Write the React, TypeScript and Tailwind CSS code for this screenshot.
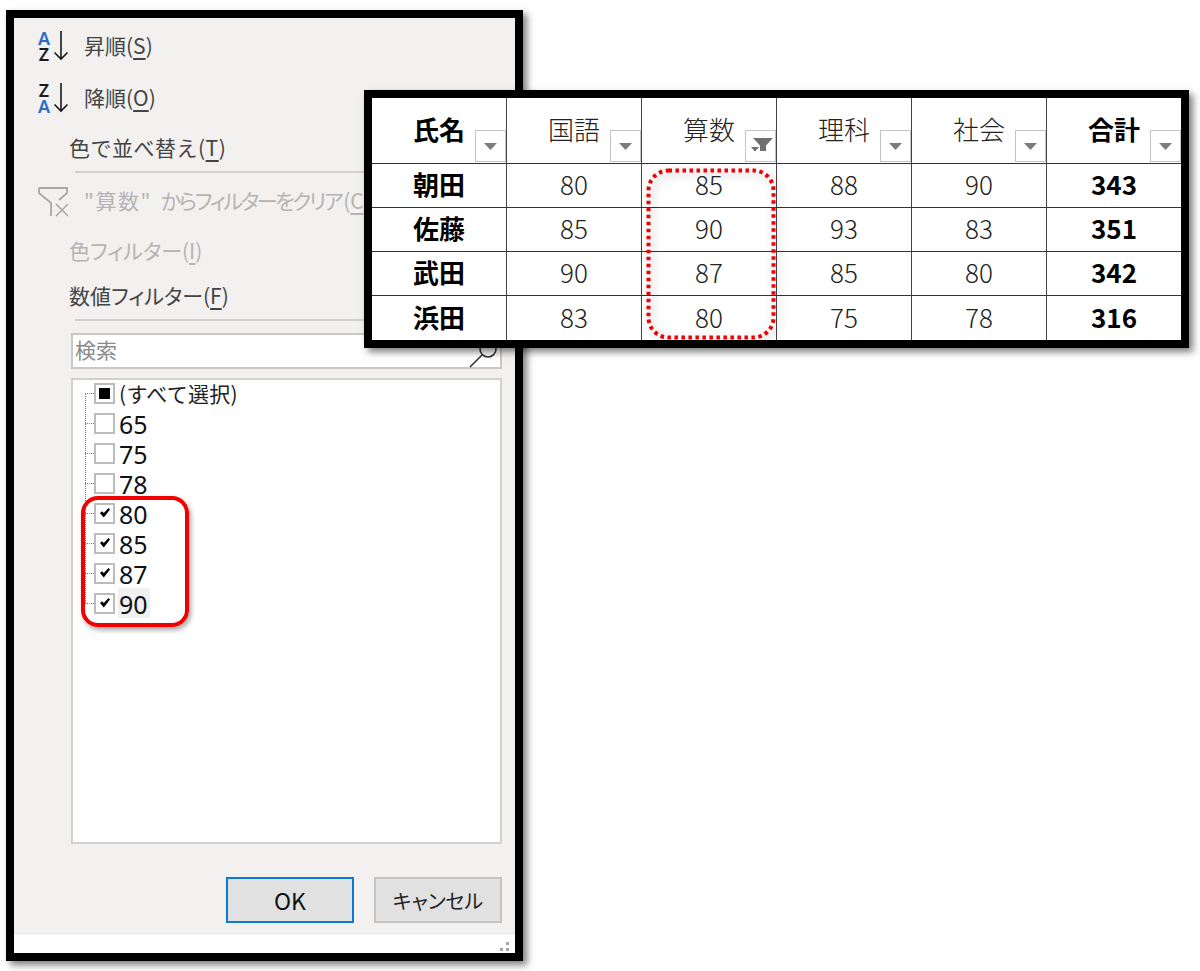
import type { ReactNode } from "react";

const font = "[font-family:'Noto_Sans_CJK_JP',sans-serif]";
const palt = "[font-feature-settings:'palt']";

const headers = [
  { label: "氏名", bold: true },
  { label: "国語" },
  { label: "算数", filter: true },
  { label: "理科" },
  { label: "社会" },
  { label: "合計", bold: true },
];

const rows = [
  ["朝田", "80", "85", "88", "90", "343"],
  ["佐藤", "85", "90", "93", "83", "351"],
  ["武田", "90", "87", "85", "80", "342"],
  ["浜田", "83", "80", "75", "78", "316"],
];

const items = [
  { label: "65", checked: false },
  { label: "75", checked: false },
  { label: "78", checked: false },
  { label: "80", checked: true },
  { label: "85", checked: true },
  { label: "87", checked: true },
  { label: "90", checked: true },
];

function SortIcon({ top, bottom }: { top: string; bottom: string }) {
  return (
    <div className="relative w-[34px] h-[32px] mr-[13px] shrink-0">
      <div className="flex flex-col items-center w-[14px] font-['Noto_Sans'] font-semibold text-[18px] leading-[16px]">
        <span className={top === "A" ? "text-[#2b6cc4]" : "text-[#1a1a1a]"}>{top}</span>
        <span className={bottom === "A" ? "text-[#2b6cc4]" : "text-[#1a1a1a]"}>{bottom}</span>
      </div>
      <svg className="absolute left-[16px] top-0" width="16" height="31" viewBox="0 0 16 31" fill="none" stroke="#1a1a1a" strokeWidth="1.6">
        <path d="M8 1v28M1.500 22.500 8 29l6.500-6.500" />
      </svg>
    </div>
  );
}

function FilterButton({ active }: { active?: boolean }) {
  return (
    <div className="absolute right-0 bottom-[1px] w-[31px] h-[32px] bg-white border border-[#c4c4c4]">
      {active ? (
        <svg className="absolute left-[5px] top-[7px]" width="23" height="15" viewBox="0 0 23 15" fill="#6f6f6f">
          <path d="M2 0h20l-7 7.500V13h-6V7.500zM0 9h8l-4 4.500z" />
        </svg>
      ) : (
        <svg className="absolute left-[8px] top-[12px]" width="13" height="7" viewBox="0 0 13 7" fill="#7c7c7c">
          <path d="M0 0h13L6.500 7z" />
        </svg>
      )}
    </div>
  );
}

function ScoreTable() {
  return (
    <div className={`absolute left-[364px] top-[90px] w-[825px] h-[258px] bg-white border-[8px] border-black shadow-[4px_4px_7px_rgba(0,0,0,0.5)] flex flex-col ${font} text-[#222]`}>
      <div className="flex h-[66px] border-b border-[#333]">
        {headers.map((h, i) => (
          <div
            key={h.label}
            className={`relative flex-1 flex justify-center pt-[11px] text-[26px] leading-[40px] ${i < 5 ? "border-r border-[#444]" : ""} ${h.bold ? "font-bold text-black" : "font-light"}`}
          >
            {h.label}
            <FilterButton active={h.filter} />
          </div>
        ))}
      </div>
      {rows.map((row, r) => (
        <div key={row[0]} className={`flex h-[44px] ${r < 3 ? "border-b border-[#333]" : ""}`}>
          {row.map((cell, i) => (
            <div
              key={i}
              className={`flex-1 flex items-center justify-center pb-[4px] text-[26px] ${i < 5 ? "border-r border-[#444]" : ""} ${i === 0 || i === 5 ? "font-bold text-black" : "font-light"}`}
            >
              {cell}
            </div>
          ))}
        </div>
      ))}
      <svg
        className="absolute left-[274px] top-[70px] drop-shadow-[3px_3px_5px_rgba(0,0,0,0.3)]"
        width="130"
        height="172"
        viewBox="0 0 130 172"
        fill="none"
        stroke="#f00000"
        strokeWidth="4"
        strokeDasharray="3.500 3.500"
      >
        <rect x="2.500" y="2.500" width="125" height="167" rx="20" />
      </svg>
    </div>
  );
}

function Checkbox({ checked, mixed }: { checked?: boolean; mixed?: boolean }) {
  return (
    <div className="relative w-[21px] h-[21px] bg-white border-2 border-[#bcbcbc] shrink-0">
      {mixed && <div className="absolute left-[3px] top-[3px] w-[11px] h-[11px] bg-black" />}
      {checked && (
        <svg className="absolute left-[4px] top-[3px]" width="10" height="10" viewBox="0 0 10 10" fill="#000">
          <path d="M0 5 2 3.200 3.800 5 8.500 0 10 1.500 3.800 9.500z" />
        </svg>
      )}
    </div>
  );
}

function TreeRow({ label, children, hover }: { label: string; children: ReactNode; hover?: boolean }) {
  return (
    <div className="flex items-center h-[30px]">
      <div className="w-[9px] border-t border-dotted border-[#777]" />
      {children}
      <span className={`ml-[3px] pl-[1px] pr-[2px] pt-[2px] text-[25px] leading-[28px] font-['Noto_Sans',sans-serif] text-[#111] ${hover ? "bg-[#f0f0f0]" : ""}`}>
        {label}
      </span>
    </div>
  );
}

function FilterMenu() {
  return (
    <div className={`relative w-[517px] h-[951px] ml-[6px] bg-[#f2f1f0] border-[8px] border-black shadow-[4px_4px_7px_rgba(0,0,0,0.5)] flex flex-col ${font} text-[21px] text-[#444]`}>
      <div className="pt-[12px] px-[23px]">
        <div className="flex items-center h-[32px]">
          <SortIcon top="A" bottom="Z" />
          <span>昇順(<span className="underline underline-offset-4">S</span>)</span>
        </div>
        <div className="flex items-center h-[32px] mt-[20px]">
          <SortIcon top="Z" bottom="A" />
          <span>降順(<span className="underline underline-offset-4">O</span>)</span>
        </div>
        <div className="h-[32px] mt-[18px] pl-[32px] flex items-center">
          <span className="tracking-[0.5px]">色で並べ替え(<span className="underline underline-offset-4">T</span>)</span>
        </div>
      </div>
      <div className="h-[2px] bg-[#d2d1d0] ml-[61px] mr-[14px] mt-[7px]" />
      <div className="px-[23px] pt-[12px] text-[#b5b4b3]">
        <div className="flex items-center h-[32px]">
          <svg className="mr-[16px] shrink-0" width="31" height="31" viewBox="0 0 31 31" fill="none" stroke="#a8a8a8" strokeWidth="1.800">
            <path d="M2 2H30V7L22 14M2 2V7L14 17V30" />
            <path d="M19 18 31 30M31 18 19 30" strokeWidth="1.500" />
          </svg>
          <span className={`whitespace-nowrap ${palt}`}>
            <span className="tracking-[1.500px]">"算数"</span>
            <span className="tracking-[-2.300px] ml-[9px]">からフィルターをクリア</span>
            <span className="ml-[2px]">(<span className="underline underline-offset-4">C</span>)</span>
          </span>
        </div>
        <div className={`h-[32px] mt-[18px] pl-[32px] flex items-center ${palt}`}>
          <span>色フィルター(<span className="underline underline-offset-4">I</span>)</span>
        </div>
      </div>
      <div className={`h-[32px] mt-[13px] pl-[55px] flex items-center ${palt}`}>
        <span>数値フィルター(<span className="underline underline-offset-4">F</span>)</span>
      </div>
      <div className="h-[2px] bg-[#d2d1d0] ml-[61px] mr-[14px] mt-[7px]" />
      <div className="relative h-[36px] mt-[12px] ml-[57px] mr-[13px] bg-white border-2 border-[#c8c8c8] pl-[2px] pb-[3px] flex items-center text-[#8a8a8a]">
        検索
        <svg className="absolute right-[1px] top-[6px]" width="30" height="28" viewBox="0 0 30 28" fill="none" stroke="#333" strokeWidth="1.600">
          <circle cx="19" cy="8" r="8" />
          <path d="M13 14 1 26" />
        </svg>
      </div>
      <div className="relative h-[466px] mt-[9px] ml-[57px] mr-[13px] bg-white border-2 border-[#d0d0d0] pl-[12px]">
        <div className="absolute left-[12px] top-[13px] h-[210px] border-l border-dotted border-[#777]" />
        <div className="flex items-center h-[30px] -mt-[2px]">
          <div className="w-[9px] border-t border-dotted border-[#777]" />
          <Checkbox mixed />
          <span className="ml-[4px] pt-[2px] text-[21px] tracking-[0.300px] text-[#222]">(すべて選択)</span>
        </div>
        {items.map((it, i) => (
          <TreeRow key={it.label} label={it.label} hover={i === items.length - 1}>
            <Checkbox checked={it.checked} />
          </TreeRow>
        ))}
        <div className="absolute left-[8px] top-[116px] w-[108px] h-[131px] rounded-[17px] border-[4px] border-[#f00000] shadow-[2px_3px_5px_rgba(0,0,0,0.35)]" />
      </div>
      <div className="flex justify-end gap-[20px] mt-[33px] mr-[13px]">
        <button className="w-[128px] h-[46px] bg-[#e1e1e1] border-2 border-[#0a7ad6] text-[23px] text-[#111]">OK</button>
        <button className={`w-[128px] h-[46px] bg-[#e1e1e1] border-2 border-[#c4c4c4] pt-[1px] text-[20px] text-[#222] ${palt}`}>キャンセル</button>
      </div>
      <div className="relative mt-auto h-[20px] bg-white border-t border-[#dfe6ee]">
        <div className="absolute right-[6px] bottom-[2px] grid grid-cols-2 gap-[3px]">
          <div className="w-[3px] h-[3px]" />
          <div className="w-[3px] h-[3px] bg-[#a5a5a5]" />
          <div className="w-[3px] h-[3px] bg-[#a5a5a5]" />
          <div className="w-[3px] h-[3px] bg-[#a5a5a5]" />
        </div>
      </div>
    </div>
  );
}

export default function App() {
  return (
    <div className="relative w-[1200px] h-[971px] bg-white overflow-hidden pt-[10px]">
      <FilterMenu />
      <ScoreTable />
    </div>
  );
}
